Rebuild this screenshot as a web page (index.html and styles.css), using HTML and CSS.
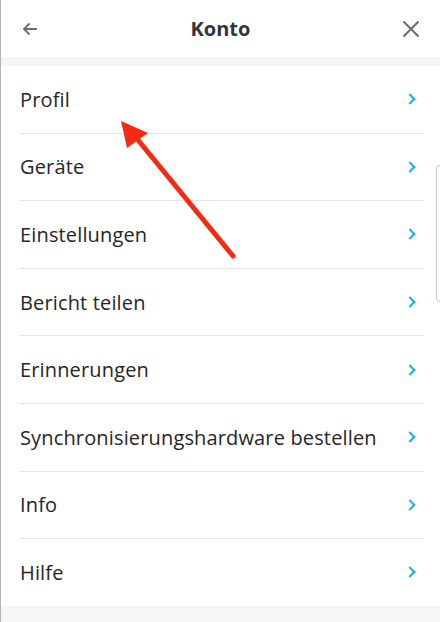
FILE: index.html
```html
<!DOCTYPE html>
<html lang="de">
<head>
    <meta charset="UTF-8">
    <meta name="viewport" content="width=device-width, initial-scale=1.0">
    <title>Konto</title>
    <link rel="stylesheet" href="styles.css">
</head>
<body>
    <div class="sheet">
        <header class="topbar">
            <button class="icon-btn" aria-label="Zurück">
                <svg width="20" height="20" viewBox="0 0 20 20"><path d="M17 10H4M9.5 4.5L4 10l5.5 5.5" fill="none" stroke="#6b6b6b" stroke-width="1.8"/></svg>
            </button>
            <h1>Konto</h1>
            <button class="icon-btn" aria-label="Schließen">
                <svg width="20" height="20" viewBox="0 0 20 20"><path d="M2.5 2.5l15 15M17.5 2.5l-15 15" fill="none" stroke="#6b6b6b" stroke-width="2"/></svg>
            </button>
        </header>

        <ul class="menu">
            <li><span>Profil</span><i class="chev"></i></li>
            <li><span>Geräte</span><i class="chev"></i></li>
            <li><span>Einstellungen</span><i class="chev"></i></li>
            <li><span>Bericht teilen</span><i class="chev"></i></li>
            <li><span>Erinnerungen</span><i class="chev"></i></li>
            <li><span>Synchronisierungshardware bestellen</span><i class="chev"></i></li>
            <li><span>Info</span><i class="chev"></i></li>
            <li><span>Hilfe</span><i class="chev"></i></li>
        </ul>

        <!-- annotation arrow over the list -->
        <svg class="pointer" width="440" height="622" viewBox="0 0 440 622">
            <line x1="233" y1="256" x2="138" y2="140" stroke="#f42a12" stroke-width="5" stroke-linecap="round"/>
            <polygon points="121,121 148,133 127,148" fill="#f42a12"/>
        </svg>
        <div class="scroll-thumb"></div>
    </div>
</body>
</html>
```

FILE: styles.css
```css
body {
    margin: 0;
    padding: 0;
    font-family: "Open Sans", Lato, sans-serif;
    background-color: #f5f6f8;
}

.sheet {
    position: relative;
    width: 440px;
    height: 622px;
    overflow: hidden;
    border-left: 1px solid #b5b5b5;
    box-sizing: border-box;
    background-color: #f5f6f8;
}

.topbar {
    height: 57px;
    background-color: #fff;
    display: flex;
    align-items: center;
    justify-content: space-between;
    padding: 0 11px 0 11px;
    margin-bottom: 9px;
}

.topbar h1 {
    margin: 0;
    font-size: 20px;
    font-weight: 700;
    color: #2f363b;
}

.icon-btn {
    width: 36px;
    height: 36px;
    border: none;
    background: none;
    padding: 0;
    display: flex;
    align-items: center;
    justify-content: center;
}

.menu {
    list-style: none;
    margin: 0;
    padding: 0;
    background-color: #fff;
}

.menu li {
    height: 66.6px;
    margin: 0 16px 0 19px;
    display: flex;
    align-items: center;
    justify-content: space-between;
    border-bottom: 1px solid #e4e4e4;
    font-size: 20px;
    letter-spacing: 0.15px;
    color: #262626;
}

.menu li:last-child {
    border-bottom: none;
}

.chev {
    width: 6px;
    height: 6px;
    border-top: 2.5px solid #1cb0e4;
    border-right: 2.5px solid #1cb0e4;
    transform: rotate(45deg);
    margin-right: 10px;
}

.pointer {
    position: absolute;
    top: 0;
    left: -1px;
}

.scroll-thumb {
    position: absolute;
    top: 165px;
    right: -4px;
    width: 6px;
    height: 135px;
    border: 1px solid #c8c8c8;
    border-radius: 4px;
}
```
